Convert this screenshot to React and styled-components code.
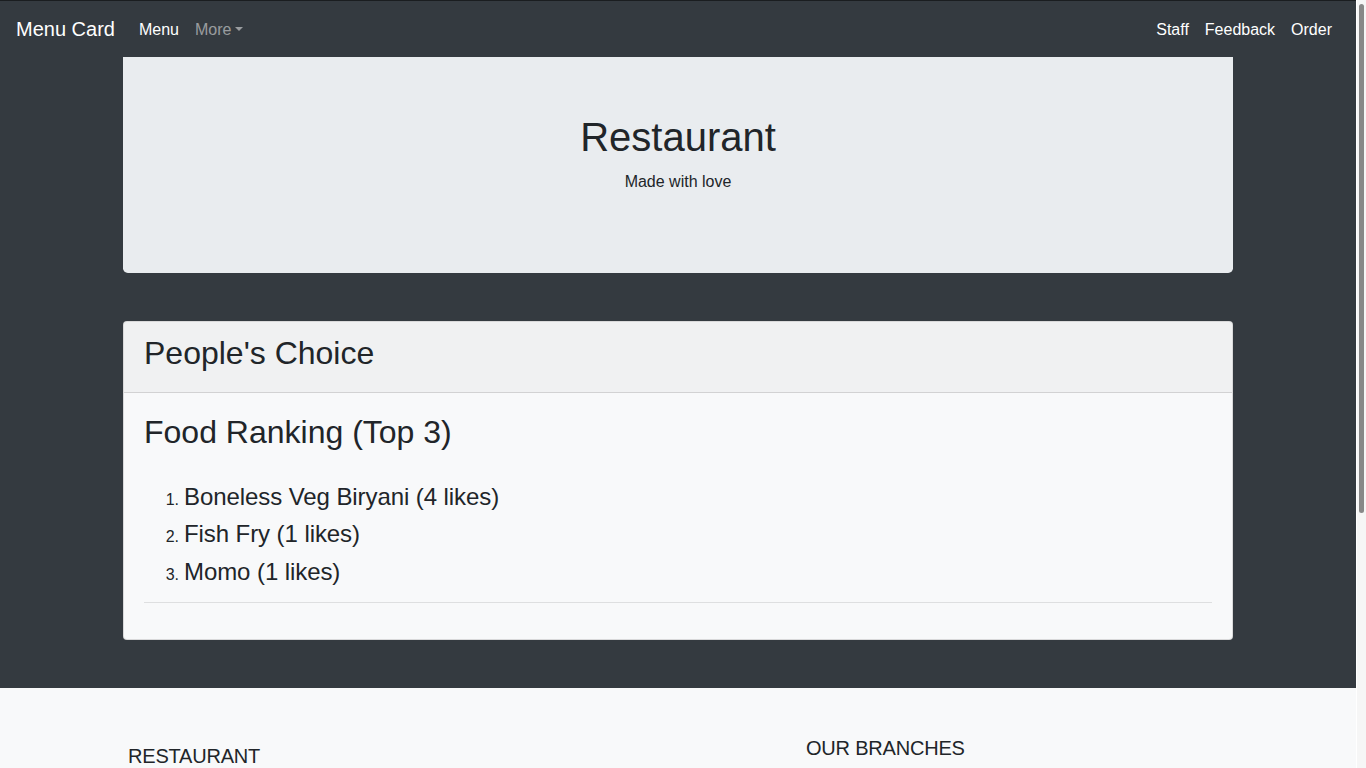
import styled, { createGlobalStyle } from "styled-components";

const GlobalStyle = createGlobalStyle`
    html {
        background: #f8f9fa;
        scrollbar-width: none;
    }
    body {
        margin: 0;
        font-family: "Liberation Sans", Arial, sans-serif;
        font-size: 16px;
        line-height: 1.5;
        color: #212529;
    }
    * {
        box-sizing: border-box;
    }
`;

const Shell = styled.div`
    display: flex;
`;

const Page = styled.div`
    flex: 1;
    min-width: 0;
`;

// page scrollbar as it shows in the screenshot
const ScrollTrack = styled.div`
    flex: 0 0 10px;
    padding: 4px 2px 0;
    background: #f6f6f6;
    border-left: 1px solid #ffffff;
`;

const ScrollThumb = styled.div`
    height: 509px;
    background: #888888;
    border-radius: 3px;
`;

const Navbar = styled.nav`
    display: flex;
    align-items: center;
    justify-content: space-between;
    padding: 8px 16px;
    background: #343a40;
    border-top: 1px solid #1a1d20;
`;

const NavGroup = styled.div`
    display: flex;
    align-items: center;
`;

const Brand = styled.a`
    font-size: 20px;
    line-height: 30px;
    padding: 5px 0;
    margin-right: 16px;
    color: #fff;
    text-decoration: none;
`;

const NavLink = styled.a`
    padding: 9px 8px 7px;
    line-height: 24px;
    color: ${({ $muted }) => ($muted ? "rgba(255, 255, 255, 0.5)" : "#fff")};
    text-decoration: none;
    cursor: pointer;

    ${({ $dropdown }) =>
        $dropdown &&
        `
        &::after {
            content: "";
            display: inline-block;
            margin-left: 4px;
            vertical-align: 4px;
            border-top: 4.8px solid;
            border-right: 4.8px solid transparent;
            border-left: 4.8px solid transparent;
        }
    `}
`;

const Main = styled.main`
    background: #343a40;
    padding-bottom: 48px;
`;

const Container = styled.div`
    max-width: 1140px;
    margin: 0 auto;
    padding: 0 15px;
`;

const Jumbotron = styled.section`
    background: #e9ecef;
    border-radius: 0 0 4.8px 4.8px;
    padding: 56px 32px 63px;
    text-align: center;
`;

const Title = styled.h1`
    margin: 0 0 9px;
    font-size: 40px;
    font-weight: 400;
    line-height: 48px;
`;

const Lead = styled.p`
    margin: 0 0 16px;
`;

const Card = styled.section`
    margin-top: 48px;
    background: #f8f9fa;
    border: 1px solid rgba(0, 0, 0, 0.125);
    border-radius: 4px;
    overflow: hidden;
`;

const CardHeader = styled.header`
    padding: 12px 20px;
    background: rgba(0, 0, 0, 0.03);
    border-bottom: 1px solid rgba(0, 0, 0, 0.125);
`;

const CardBody = styled.div`
    padding: 20px;
`;

const Heading = styled.h2`
    margin: 0 0 8px;
    font-size: 32px;
    font-weight: 400;
    line-height: 38.4px;
`;

const Ranking = styled.ol`
    list-style: none;
    margin: 26px 0 12px;
    padding: 0;
`;

const RankItem = styled.li`
    display: flex;
    align-items: baseline;
`;

const RankNum = styled.span`
    width: 40px;
    padding-right: 5px;
    text-align: right;
    font-size: 16px;
    line-height: 24px;
`;

const RankLabel = styled.span`
    font-size: 24px;
    line-height: 37.5px;
    letter-spacing: -0.08px;
`;

const Divider = styled.hr`
    margin: 0 0 16px;
    border: 0;
    border-top: 1px solid rgba(0, 0, 0, 0.1);
`;

const Footer = styled.footer`
    display: grid;
    grid-template-columns: repeat(12, 1fr);
    align-items: start;
    min-height: 471px;
    padding-top: 48px;
    background: #f8f9fa;
`;

const FooterCol = styled.div`
    grid-column: ${({ $start }) => $start} / span ${({ $span }) => $span};
    padding: ${({ $offset }) => $offset || 0}px 15px 0;
`;

const FooterTitle = styled.h5`
    margin: 0 0 8px;
    font-size: 20px;
    font-weight: 400;
    line-height: 24px;
    letter-spacing: -0.2px;
    text-transform: uppercase;
`;

const ranking = [
    { name: "Boneless Veg Biryani", likes: 4 },
    { name: "Fish Fry", likes: 1 },
    { name: "Momo", likes: 1 },
];

export default function App() {
    return (
        <>
            <GlobalStyle />
            <Shell>
                <Page>
                    <Navbar>
                        <NavGroup>
                            <Brand href="#">Menu Card</Brand>
                            <NavLink href="#">Menu</NavLink>
                            <NavLink $muted $dropdown>More</NavLink>
                        </NavGroup>
                        <NavGroup>
                            <NavLink href="#">Staff</NavLink>
                            <NavLink href="#">Feedback</NavLink>
                            <NavLink href="#">Order</NavLink>
                        </NavGroup>
                    </Navbar>
                    <Main>
                        <Container>
                            <Jumbotron>
                                <Title>Restaurant</Title>
                                <Lead>Made with love</Lead>
                            </Jumbotron>
                            <Card>
                                <CardHeader>
                                    <Heading>People's Choice</Heading>
                                </CardHeader>
                                <CardBody>
                                    <Heading>Food Ranking (Top 3)</Heading>
                                    <Ranking>
                                        {ranking.map((item, i) => (
                                            <RankItem key={item.name}>
                                                <RankNum>{i + 1}.</RankNum>
                                                <RankLabel>
                                                    {item.name} ({item.likes} likes)
                                                </RankLabel>
                                            </RankItem>
                                        ))}
                                    </Ranking>
                                    <Divider />
                                </CardBody>
                            </Card>
                        </Container>
                    </Main>
                    <Footer>
                        <FooterCol $start={2} $span={5} $offset={8}>
                            <FooterTitle>Restaurant</FooterTitle>
                        </FooterCol>
                        <FooterCol $start={8} $span={4}>
                            <FooterTitle>Our Branches</FooterTitle>
                        </FooterCol>
                    </Footer>
                </Page>
                <ScrollTrack>
                    <ScrollThumb />
                </ScrollTrack>
            </Shell>
        </>
    );
}
